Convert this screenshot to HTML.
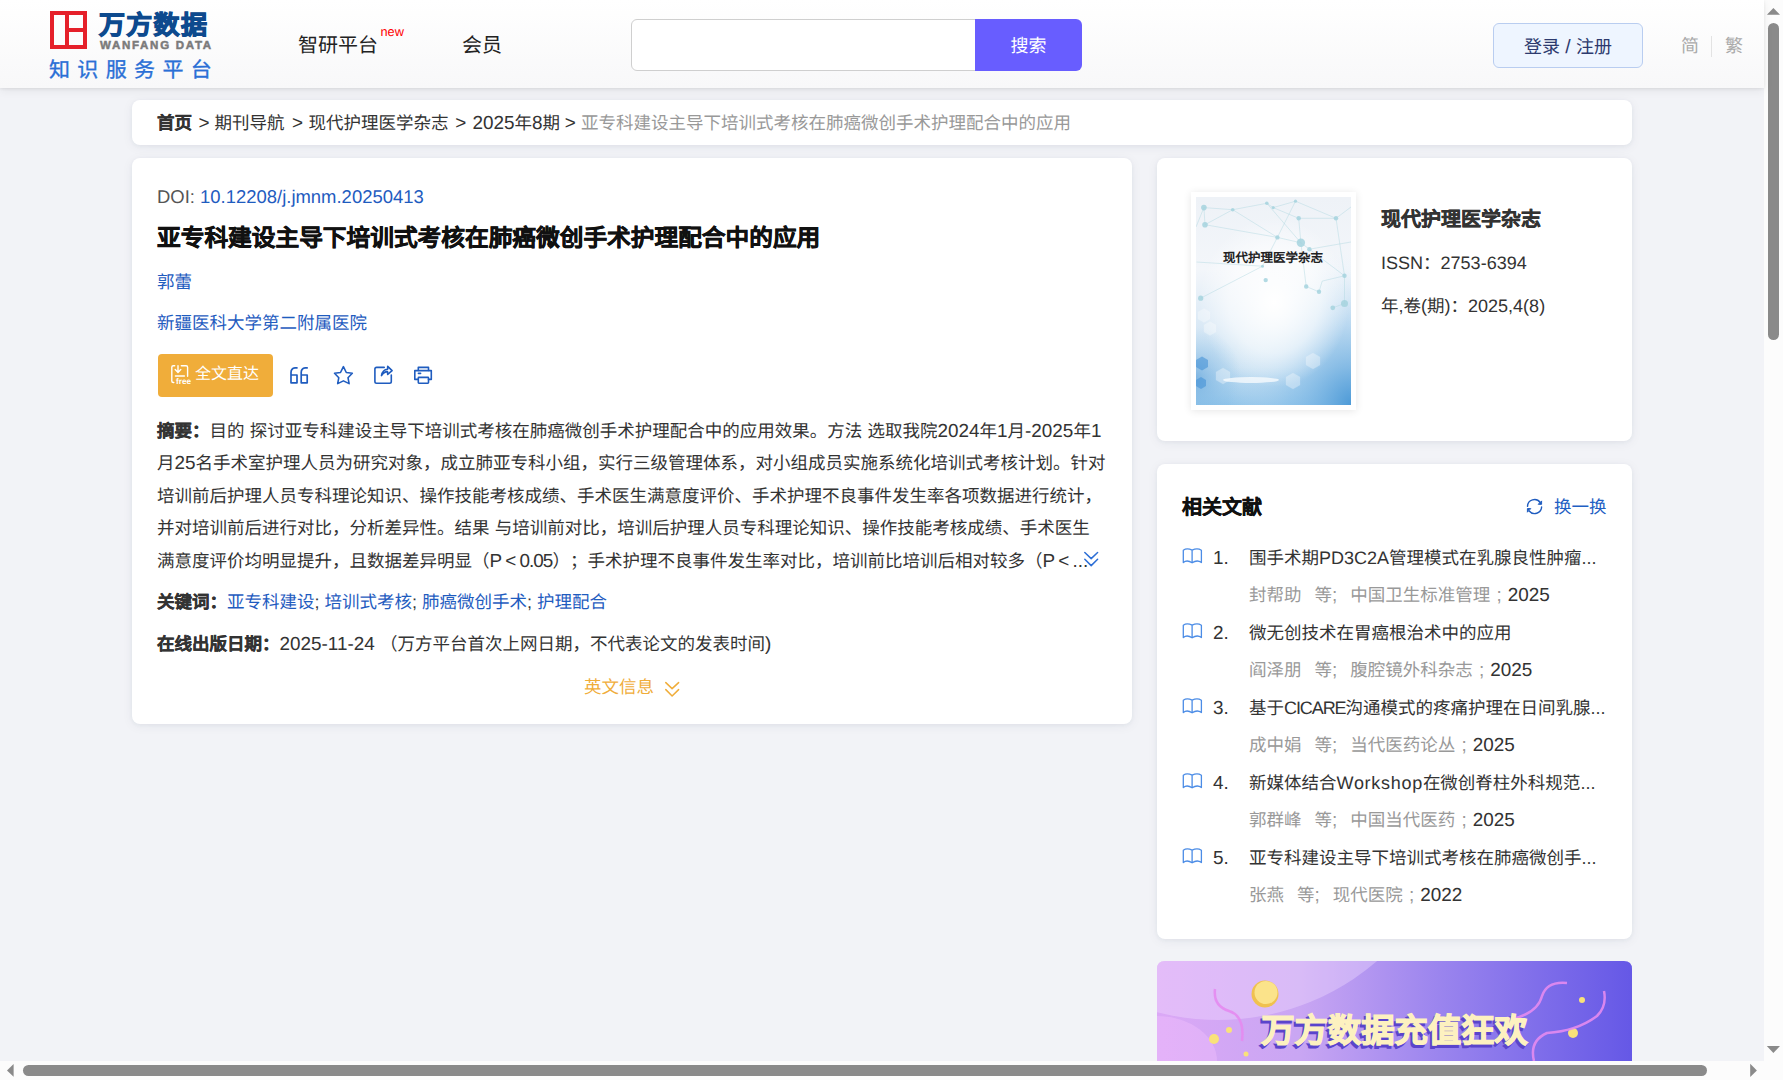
<!DOCTYPE html>
<html lang="zh-CN"><head><meta charset="utf-8">
<style>
.a{font-size:108%;line-height:0}
.a2{font-size:103%;line-height:0}
*{margin:0;padding:0;box-sizing:border-box}
html,body{width:1783px;height:1080px;overflow:hidden}
body{font-family:"Liberation Sans",sans-serif;text-rendering:geometricPrecision;text-spacing-trim:space-all;background:#f2f3f7;position:relative;color:#333}
.abs{position:absolute;white-space:nowrap}
#hdr{position:absolute;left:0;top:0;width:1764px;height:88px;background:linear-gradient(#ffffff,#f8f8f9);box-shadow:0 1px 3px rgba(0,0,0,0.07),0 2px 10px rgba(0,0,0,0.07);z-index:2}
.card{position:absolute;background:#fff;border-radius:8px;box-shadow:0 1px 4px rgba(40,50,70,0.05),0 2px 12px rgba(40,50,80,0.06)}
.blue{color:#1f5cbf}
.t{font-size:17.5px;line-height:26px}
svg{position:absolute;overflow:visible}
b{-webkit-text-stroke:0.3px currentColor}
</style></head><body>
<div id="hdr">
  <!-- logo -->
  <div class="abs" style="left:50px;top:11px;width:37px;height:38px;border:4px solid #e5202a;"></div>
  <div class="abs" style="left:65px;top:11px;width:4px;height:38px;background:#e5202a"></div>
  <div class="abs" style="left:69px;top:28px;width:16px;height:4px;background:#e5202a"></div>
  <div class="abs" style="left:99px;top:7px;font-size:26px;font-weight:900;color:#0d4a8e;-webkit-text-stroke:1.1px #0d4a8e;letter-spacing:1.3px;line-height:36px">万方数据</div>
  <div class="abs" style="left:100px;top:39px;font-size:11.5px;font-weight:bold;color:#7b7b7b;-webkit-text-stroke:0.5px #7b7b7b;letter-spacing:1.72px;line-height:14px">WANFANG DATA</div>
  <div class="abs" style="left:49px;top:55.5px;font-size:21px;color:#2a6fd6;-webkit-text-stroke:0.35px #2a6fd6;letter-spacing:7.35px;line-height:30px">知识服务平台</div>
  <div class="abs" style="left:298px;top:32px;font-size:20px;color:#222;line-height:28px">智研平台</div>
  <div class="abs" style="left:380.5px;top:23.5px;font-size:12.8px;color:#f00;line-height:16px">new</div>
  <div class="abs" style="left:462px;top:32px;font-size:20px;color:#222;line-height:28px">会员</div>
  <!-- search -->
  <div class="abs" style="left:631px;top:19px;width:352px;height:52px;border:1px solid #cfcfcf;border-radius:6px 0 0 6px;background:#fff"></div>
  <div class="abs" style="left:975px;top:19px;width:107px;height:52px;border-radius:0 6px 6px 0;background:#685dff;color:#fff;font-size:18px;line-height:52px;padding-top:1px;text-align:center">搜索</div>
  <!-- login -->
  <div class="abs" style="left:1493px;top:23px;width:150px;height:45px;border:1px solid #b9cdf0;border-radius:6px;background:#eef5ff;color:#2d3a6e;font-size:18px;line-height:46.5px;text-align:center">登录<span class="a"> / </span>注册</div>
  <div class="abs" style="left:1681px;top:33px;font-size:18px;color:#aaa;line-height:26px">简</div>
  <div class="abs" style="left:1711px;top:36px;width:1px;height:21px;background:#e3e3e3"></div>
  <div class="abs" style="left:1725px;top:33px;font-size:18px;color:#aaa;line-height:26px">繁</div>
</div>

<!-- breadcrumb -->
<div class="card" style="left:132px;top:100px;width:1500px;height:45px;"></div>
<div class="abs t" style="left:157px;top:110px;color:#333"><b>首页</b></div>
<div class="abs t" style="left:198.5px;top:110px;color:#333"><span class="a">&gt;</span></div>
<div class="abs t" style="left:214.5px;top:110px;color:#333">期刊导航</div>
<div class="abs t" style="left:292px;top:110px;color:#333"><span class="a">&gt;</span></div>
<div class="abs t" style="left:308.5px;top:110px;color:#333">现代护理医学杂志</div>
<div class="abs t" style="left:455.2px;top:110px;color:#333"><span class="a">&gt;</span></div>
<div class="abs t" style="left:472.5px;top:110px;color:#333"><span class="a">2025</span>年<span class="a">8</span>期</div>
<div class="abs t" style="left:564.7px;top:110px;color:#333"><span class="a">&gt;</span></div>
<div class="abs t" style="left:581px;top:110px;color:#999">亚专科建设主导下培训式考核在肺癌微创手术护理配合中的应用</div>

<!-- main card -->
<div class="card" style="left:132px;top:158px;width:1000px;height:566px;"></div>

<!-- right card 1 -->
<div class="card" style="left:1157px;top:158px;width:475px;height:283px;"></div>
<!-- right card 2 -->
<div class="card" style="left:1157px;top:464px;width:475px;height:475px;"></div>
<!-- banner -->


<!-- CONTENT -->
<div class="abs" style="left:157px;top:184.5px;font-size:17.1px;line-height:26px;color:#555"><span class="a">DOI: </span><span class="blue"><span class="a">10.12208/j.jmnm.20250413</span></span></div>
<div class="abs" style="left:157px;top:222.5px;font-size:23.7px;line-height:32px;color:#111;font-weight:bold;-webkit-text-stroke:0.5px #111">亚专科建设主导下培训式考核在肺癌微创手术护理配合中的应用</div>
<div class="abs blue t" style="left:157px;top:268.5px">郭蕾</div>
<div class="abs blue t" style="left:157px;top:309.5px">新疆医科大学第二附属医院</div>
<div class="abs" style="left:158px;top:354px;width:115px;height:43px;border-radius:4px;background:#f0ad3a"></div>
<div class="abs" style="left:195px;top:362px;font-size:16px;line-height:26px;color:#fff">全文直达</div>
<div id="abs" style="position:absolute;left:157px;top:414.5px;font-size:17.5px;line-height:32.5px;color:#333;white-space:nowrap">
<div><b>摘要：</b>目的<span class="a"> </span>探讨亚专科建设主导下培训式考核在肺癌微创手术护理配合中的应用效果。方法<span class="a"> </span>选取我院<span class="a">2024</span>年<span class="a">1</span>月<span class="a">-2025</span>年<span class="a">1</span></div>
<div>月<span class="a">25</span>名手术室护理人员为研究对象，成立肺亚专科小组，实行三级管理体系，对小组成员实施系统化培训式考核计划。针对</div>
<div>培训前后护理人员专科理论知识、操作技能考核成绩、手术医生满意度评价、手术护理不良事件发生率各项数据进行统计，</div>
<div>并对培训前后进行对比，分析差异性。结果<span class="a"> </span>与培训前对比，培训后护理人员专科理论知识、操作技能考核成绩、手术医生</div>
<div>满意度评价均明显提升，且数据差异明显（<span class="a">P</span><span style="display:inline-block;width:17.5px;text-align:center"><span class="a">&lt;</span></span><span style="letter-spacing:-1px"><span class="a">0.05</span></span>）；手术护理不良事件发生率对比，培训前比培训后相对较多（<span class="a">P</span><span style="display:inline-block;width:17.5px;text-align:center"><span class="a">&lt;</span></span><span class="a">...</span></div>
</div>
<div class="abs t l2" style="left:157px;top:588.5px;color:#333"><b>关键词：</b><span class="blue">亚专科建设</span><span class="a2">; </span><span class="blue">培训式考核</span><span class="a2">; </span><span class="blue">肺癌微创手术</span><span class="a2">; </span><span class="blue">护理配合</span></div>
<div class="abs t" style="left:157px;top:631px;color:#333"><b>在线出版日期：</b><span class="a">2025-11-24 </span>（万方平台首次上网日期，不代表论文的发表时间<span class="a">)</span></div>
<div class="abs t" style="left:584px;top:674px;color:#f0ad3a">英文信息</div>

<!-- journal card -->
<div class="abs" style="left:1191px;top:192px;width:165px;height:218px;background:#fff;box-shadow:0 1px 8px rgba(0,0,0,0.10)"></div>

<!-- cover -->
<svg style="left:1196px;top:197px;overflow:hidden" width="155" height="208" viewBox="0 0 155 208">
<defs>
<linearGradient id="cgv" x1="0" y1="0" x2="0" y2="1">
<stop offset="0" stop-color="#eef2f7"/>
<stop offset="0.35" stop-color="#f3f6fa"/>
<stop offset="0.6" stop-color="#dceaf6"/>
<stop offset="0.82" stop-color="#c2ddf1"/>
<stop offset="1" stop-color="#8fc3e9"/>
</linearGradient>
<radialGradient id="cgw" cx="0.5" cy="0.5" r="0.5">
<stop offset="0" stop-color="#ffffff" stop-opacity="1"/>
<stop offset="0.6" stop-color="#ffffff" stop-opacity="0.6"/>
<stop offset="1" stop-color="#ffffff" stop-opacity="0"/>
</radialGradient>
<radialGradient id="cgb" cx="1" cy="1" r="0.8">
<stop offset="0" stop-color="#4a98d6" stop-opacity="0.95"/>
<stop offset="0.5" stop-color="#8ec2ea" stop-opacity="0.4"/>
<stop offset="1" stop-color="#ffffff" stop-opacity="0"/>
</radialGradient>
<radialGradient id="cgl" cx="0.5" cy="0.5" r="0.5"><stop offset="0" stop-color="#5a9fd9" stop-opacity="0.6"/><stop offset="1" stop-color="#8fc3e9" stop-opacity="0"/></radialGradient>
</defs>
<rect width="155" height="208" fill="url(#cgv)"/>
<rect width="155" height="208" fill="url(#cgb)"/>
<ellipse cx="78" cy="105" rx="75" ry="85" fill="url(#cgw)"/>
<ellipse cx="0" cy="180" rx="45" ry="50" fill="url(#cgl)"/>
<g stroke="#afd6e0" stroke-width="0.6" fill="none" opacity="0.75">
<path d="M7.9,10.6 L36.7,12.7 L70.8,6.3 L77.2,10.6 L99.5,4.2 L140,21.3 L102.7,21.3 L77.2,10.6 M36.7,12.7 L9,27.7 L81.4,40.4 L104.9,45.8 L113.4,52.2 L148.5,78.8 L148.5,106.5 L136.8,110.8 M36.7,12.7 L81.4,40.4 L66.5,69.2 L4.7,101.2 M0.5,65 L66.5,69.2 M102.7,21.3 L104.9,45.8 L110.2,89.5 L123,94.8 L126.2,84.1 L148.5,78.8 M140,21.3 L148.5,78.8 M99.5,4.2 L81.4,40.4 M7.9,10.6 L9,27.7 M70.8,6.3 L104.9,45.8 M140,21.3 L155,10 M0,30 L7.9,10.6 M113.4,52.2 L155,45"/>
</g>
<g fill="#a6d4df" opacity="0.85">
<circle cx="7.9" cy="10.6" r="2.8"/><circle cx="36.7" cy="12.7" r="1.8"/><circle cx="70.8" cy="6.3" r="1.8"/><circle cx="77.2" cy="10.6" r="1.6"/>
<circle cx="99.5" cy="4.2" r="1.6"/><circle cx="102.7" cy="21.3" r="2.2"/><circle cx="140" cy="21.3" r="2.2"/><circle cx="9" cy="27.7" r="2.8"/>
<circle cx="81.4" cy="40.4" r="2.2"/><circle cx="104.9" cy="45.8" r="4.2"/><circle cx="113.4" cy="52.2" r="2.2"/><circle cx="69.7" cy="83.1" r="2.2"/>
<circle cx="110.2" cy="89.5" r="2.2"/><circle cx="123" cy="94.8" r="2.2"/><circle cx="4.7" cy="101.2" r="2.6"/><circle cx="148.5" cy="78.8" r="2.2"/>
<circle cx="148.5" cy="106.5" r="3.5"/><circle cx="136.8" cy="110.8" r="2.4"/><circle cx="66.5" cy="69.2" r="1.5"/>
</g>
<g fill="#ffffff" opacity="0.35" stroke="#ffffff" stroke-opacity="0.5" stroke-width="0.6">
<path d="M2,115 l6,-3.5 l6,3.5 v7 l-6,3.5 l-6,-3.5z"/>
<path d="M8,128 l6,-3.5 l6,3.5 v7 l-6,3.5 l-6,-3.5z"/>
<path d="M20,175 l7,-4 l7,4 v8 l-7,4 l-7,-4z"/>
<path d="M90,180 l7,-4 l7,4 v8 l-7,4 l-7,-4z"/>
<path d="M110,160 l7,-4 l7,4 v8 l-7,4 l-7,-4z"/>
</g>
<g fill="#3f8fd6" opacity="0.55">
<path d="M0,163 l6,-3.5 l6,3.5 v7 l-6,3.5 l-6,-3.5z"/>
<path d="M0,183 l5,-3 l5,3 v6 l-5,3 l-5,-3z"/>
</g>
<ellipse cx="55" cy="183" rx="28" ry="3" fill="#ffffff" opacity="0.7"/>
</svg>
<div class="abs" style="left:1223px;top:249px;font-size:12.5px;line-height:18px;color:#222;font-weight:bold">现代护理医学杂志</div>

<!-- banner -->
<svg style="left:1157px;top:961px" width="475" height="100" viewBox="0 0 475 100">
<defs>
<linearGradient id="bg1" x1="0" y1="0" x2="1" y2="0">
<stop offset="0" stop-color="#dba8f6"/>
<stop offset="0.3" stop-color="#c9a6f3"/>
<stop offset="0.6" stop-color="#9a84ee"/>
<stop offset="1" stop-color="#6558e6"/>
</linearGradient>
<clipPath id="bc"><path d="M8,0 H467 Q475,0 475,8 V100 H0 V8 Q0,0 8,0 Z"/></clipPath>
</defs>
<g clip-path="url(#bc)">
<rect width="475" height="100" fill="url(#bg1)"/>
<circle cx="61" cy="-185" r="244" fill="#f3ddff" opacity="0.38"/>
<ellipse cx="0" cy="100" rx="60" ry="45" fill="#f6c6ff" opacity="0.35"/>
<circle cx="108" cy="33" r="13.5" fill="#f0c14f"/>
<circle cx="109" cy="31.5" r="11.5" fill="#fbe38a"/>
<circle cx="57" cy="78" r="5" fill="#f9e27a"/>
<circle cx="72" cy="69" r="3" fill="#f9e27a"/>
<circle cx="89" cy="93" r="2.5" fill="#f9e27a"/>
<circle cx="416" cy="72" r="5" fill="#f9e27a"/>
<circle cx="425" cy="39" r="3" fill="#f9e27a"/>
<path d="M58,28 Q56,45 72,50 Q88,55 85,80" stroke="#e48bf0" stroke-width="2.5" fill="none" opacity="0.9"/>
<path d="M345,60 Q380,55 385,35 Q390,20 410,22 M377,100 Q372,80 390,72 Q420,70 440,55 Q450,45 447,30" stroke="#e48bf0" stroke-width="2.5" fill="none" opacity="0.9"/>
</g>
<text x="102.5" y="84" font-size="33" font-weight="900" fill="#5a44cc" stroke="#5a44cc" stroke-width="1.4" font-family="Liberation Sans" style="letter-spacing:0.3px">万方数据充值狂欢</text>
<text x="104.5" y="80.5" font-size="33" font-weight="900" fill="#fdf1c0" stroke="#fdf1c0" stroke-width="1.3" font-family="Liberation Sans" style="letter-spacing:0.3px">万方数据充值狂欢</text>
</svg>

<div class="abs" style="left:1381px;top:206px;font-size:20px;line-height:28px;color:#333;font-weight:bold;-webkit-text-stroke:0.4px #333">现代护理医学杂志</div>
<div class="abs t l2" style="left:1381px;top:249.5px;color:#333"><span class="a2">ISSN</span>：<span class="a2">2753-6394</span></div>
<div class="abs t l2" style="left:1381px;top:292.5px;color:#333">年<span class="a2">,</span>卷<span class="a2">(</span>期<span class="a2">)</span>：<span class="a2">2025,4(8)</span></div>

<!-- related -->
<div class="abs" style="left:1182px;top:493.5px;font-size:20px;line-height:28px;color:#111;font-weight:bold;-webkit-text-stroke:0.4px #111">相关文献</div>
<div class="abs t" style="left:1554px;top:494px;color:#1f5fc4">换一换</div>
<div class="abs t" style="left:1213px;top:544.5px;color:#333"><span class="a">1.</span></div>
<div class="abs t l2" style="left:1249px;top:544.5px;color:#333">围手术期<span class="a2">PD3C2A</span>管理模式在乳腺良性肿瘤<span class="a2">...</span></div>
<div class="abs t" style="left:1249px;top:581.5px;color:#999">封帮助<span style="margin-left:13px">等<span class="a">;</span></span><span style="margin-left:13px">中国卫生标准管理</span><span style="display:inline-block;width:17.5px;text-align:center"><span class="a">;</span></span><span style="color:#333"><span class="a">2025</span></span></div>
<div class="abs t" style="left:1213px;top:619.5px;color:#333"><span class="a">2.</span></div>
<div class="abs t l2" style="left:1249px;top:619.5px;color:#333">微无创技术在胃癌根治术中的应用</div>
<div class="abs t" style="left:1249px;top:656.5px;color:#999">阎泽朋<span style="margin-left:13px">等<span class="a">;</span></span><span style="margin-left:13px">腹腔镜外科杂志</span><span style="display:inline-block;width:17.5px;text-align:center"><span class="a">;</span></span><span style="color:#333"><span class="a">2025</span></span></div>
<div class="abs t" style="left:1213px;top:694.5px;color:#333"><span class="a">3.</span></div>
<div class="abs t l2" style="left:1249px;top:694.5px;color:#333">基于<span style="letter-spacing:-1.1px"><span class="a2">CICARE</span></span>沟通模式的疼痛护理在日间乳腺<span class="a2">...</span></div>
<div class="abs t" style="left:1249px;top:731.5px;color:#999">成中娟<span style="margin-left:13px">等<span class="a">;</span></span><span style="margin-left:13px">当代医药论丛</span><span style="display:inline-block;width:17.5px;text-align:center"><span class="a">;</span></span><span style="color:#333"><span class="a">2025</span></span></div>
<div class="abs t" style="left:1213px;top:769.5px;color:#333"><span class="a">4.</span></div>
<div class="abs t l2" style="left:1249px;top:769.5px;color:#333">新媒体结合<span style="letter-spacing:0.7px"><span class="a2">Workshop</span></span>在微创脊柱外科规范<span class="a2">...</span></div>
<div class="abs t" style="left:1249px;top:806.5px;color:#999">郭群峰<span style="margin-left:13px">等<span class="a">;</span></span><span style="margin-left:13px">中国当代医药</span><span style="display:inline-block;width:17.5px;text-align:center"><span class="a">;</span></span><span style="color:#333"><span class="a">2025</span></span></div>
<div class="abs t" style="left:1213px;top:844.5px;color:#333"><span class="a">5.</span></div>
<div class="abs t l2" style="left:1249px;top:844.5px;color:#333">亚专科建设主导下培训式考核在肺癌微创手<span class="a2">...</span></div>
<div class="abs t" style="left:1249px;top:881.5px;color:#999">张燕<span style="margin-left:13px">等<span class="a">;</span></span><span style="margin-left:13px">现代医院</span><span style="display:inline-block;width:17.5px;text-align:center"><span class="a">;</span></span><span style="color:#333"><span class="a">2022</span></span></div>

<!-- icons -->
<svg style="left:166px;top:360px" width="30" height="30" viewBox="0 0 30 30" fill="none" stroke="#fff" stroke-width="1.4" stroke-linecap="round" stroke-linejoin="round">
<path d="M8.7,5.8 H7.3 Q5.8,5.8 5.8,7.3 V21 Q5.8,22.5 7.3,22.5 H7.8"/>
<path d="M15.3,5.8 H20.1 Q21.6,5.8 21.6,7.3 V16.3"/>
<path d="M12,5.6 V12.3 M9.2,9.6 L12,12.4 L14.8,9.6"/>
<path d="M9.4,16 H18.4"/>
<text x="10" y="24.2" font-size="8.2" font-weight="bold" fill="#fff" stroke="none" font-family="Liberation Sans">free</text>
</svg>
<svg style="left:286px;top:362px" width="28" height="26" viewBox="0 0 28 26" fill="none" stroke="#1f5cbf" stroke-width="1.7" stroke-linejoin="round">
<path d="M11.6,5.8 H9 Q5,6.2 5,10.5 V20.8 H11 V13 H5"/>
<path d="M21.8,5.8 H19.2 Q15.2,6.2 15.2,10.5 V20.8 H21.2 V13 H15.2"/>
</svg>
<svg style="left:330px;top:362px" width="28" height="26" viewBox="0 0 28 26" fill="none" stroke="#1f5cbf" stroke-width="1.6" stroke-linejoin="round">
<path d="M13.4,4.6 L16.3,10.5 L22.3,11.3 L18,15.7 L19.1,21.6 L13.4,18.9 L7.7,21.6 L8.8,15.7 L4.5,11.3 L10.5,10.5 Z"/>
</svg>
<svg style="left:370px;top:362px" width="28" height="26" viewBox="0 0 28 26" fill="none" stroke="#1f5cbf" stroke-width="1.6" stroke-linejoin="round" stroke-linecap="round">
<path d="M14.2,5.4 H6.6 Q4.9,5.4 4.9,7.1 V19.5 Q4.9,21.2 6.6,21.2 H19.6 Q21.3,21.2 21.3,19.5 V13"/>
<path d="M11.5,13.6 Q12.6,7.6 17.6,7.3 L17.7,4.4 L22.1,8.6 L17.7,12.4 L17.5,9.6 Q13.8,9.8 11.5,13.6 Z"/>
</svg>
<svg style="left:410px;top:362px" width="28" height="26" viewBox="0 0 28 26" fill="none" stroke="#1f5cbf" stroke-width="1.6" stroke-linejoin="round" stroke-linecap="round">
<path d="M8.3,8.4 V5.4 H18.5 V8.4"/>
<path d="M8.2,17.4 H4.8 V8.6 H21.3 V17.4 H18.5"/>
<rect x="8.3" y="15.4" width="10.2" height="5.8" rx="0.6"/>
<path d="M8.4,11.4 H10.6"/>
</svg>
<svg style="left:1080px;top:548px" width="22" height="22" viewBox="0 0 22 22" fill="none" stroke="#2d6fd6" stroke-width="1.5" stroke-linecap="round" stroke-linejoin="round">
<path d="M4.8,4.5 L11.2,10.6 L17.6,4.5 M4.8,11.2 L11.2,17.6 L17.6,11.2"/>
</svg>
<svg style="left:662px;top:678px" width="22" height="22" viewBox="0 0 22 22" fill="none" stroke="#f0ad3a" stroke-width="1.5" stroke-linecap="round" stroke-linejoin="round">
<path d="M3.8,4.6 L10.1,10.6 L16.6,4.6 M3.8,11.6 L10.1,18 L16.6,11.6"/>
</svg>
<svg style="left:1522px;top:494px" width="26" height="26" viewBox="0 0 26 26" fill="none" stroke="#1f5cbf" stroke-width="1.4" stroke-linecap="round">
<path d="M5.5,12.4 A7,7 0 0 1 18.2,8.6"/>
<path d="M19.6,13 A7,7 0 0 1 7.2,17"/>
<path d="M19.6,7.3 V10.3 H16.6 Z M5.4,17.8 V14.6 H8.4 Z" fill="#1f5cbf" stroke-width="1"/>
</svg>
<svg style="left:1178px;top:542px" width="28" height="28" viewBox="0 0 28 28" fill="none" stroke="#4b8ce6" stroke-width="1.3" stroke-linejoin="round" stroke-linecap="round">
<path d="M5.3,20.5 V8.2 Q9,5.6 14.1,8.2 Q19.2,5.6 23.4,8.2 V20.5 Q19.2,17.4 14.1,20.8 Q9,17.4 5.3,20.5 Z M14.1,8.2 V20.8"/>
</svg>
<svg style="left:1178px;top:617px" width="28" height="28" viewBox="0 0 28 28" fill="none" stroke="#4b8ce6" stroke-width="1.3" stroke-linejoin="round" stroke-linecap="round">
<path d="M5.3,20.5 V8.2 Q9,5.6 14.1,8.2 Q19.2,5.6 23.4,8.2 V20.5 Q19.2,17.4 14.1,20.8 Q9,17.4 5.3,20.5 Z M14.1,8.2 V20.8"/>
</svg>
<svg style="left:1178px;top:692px" width="28" height="28" viewBox="0 0 28 28" fill="none" stroke="#4b8ce6" stroke-width="1.3" stroke-linejoin="round" stroke-linecap="round">
<path d="M5.3,20.5 V8.2 Q9,5.6 14.1,8.2 Q19.2,5.6 23.4,8.2 V20.5 Q19.2,17.4 14.1,20.8 Q9,17.4 5.3,20.5 Z M14.1,8.2 V20.8"/>
</svg>
<svg style="left:1178px;top:767px" width="28" height="28" viewBox="0 0 28 28" fill="none" stroke="#4b8ce6" stroke-width="1.3" stroke-linejoin="round" stroke-linecap="round">
<path d="M5.3,20.5 V8.2 Q9,5.6 14.1,8.2 Q19.2,5.6 23.4,8.2 V20.5 Q19.2,17.4 14.1,20.8 Q9,17.4 5.3,20.5 Z M14.1,8.2 V20.8"/>
</svg>
<svg style="left:1178px;top:842px" width="28" height="28" viewBox="0 0 28 28" fill="none" stroke="#4b8ce6" stroke-width="1.3" stroke-linejoin="round" stroke-linecap="round">
<path d="M5.3,20.5 V8.2 Q9,5.6 14.1,8.2 Q19.2,5.6 23.4,8.2 V20.5 Q19.2,17.4 14.1,20.8 Q9,17.4 5.3,20.5 Z M14.1,8.2 V20.8"/>
</svg>
<!-- /CONTENT -->
<!-- scrollbars -->
<div class="abs" style="left:1764px;top:0;width:19px;height:1080px;background:#fcfcfc"></div>
<div class="abs" style="left:0;top:1061px;width:1783px;height:19px;background:#fcfcfc"></div>
<div class="abs" style="left:1768px;top:23px;width:11px;height:317px;border-radius:5.5px;background:#8a8a8a"></div>
<div class="abs" style="left:23px;top:1065px;width:1684px;height:11px;border-radius:5.5px;background:#8a8a8a"></div>
<svg style="left:0;top:0" width="1783" height="1080"><g fill="#8a8a8a">
<path d="M1773.4,8 L1780,14.8 L1766.9,14.8 Z"/>
<path d="M1766.8,1046 L1780,1046 L1773.4,1053 Z"/>
<path d="M7,1070.4 L13.6,1064 L13.6,1076.8 Z"/>
<path d="M1750.2,1063.8 L1756.9,1070.4 L1750.2,1077 Z"/>
</g></svg>
</body></html>
